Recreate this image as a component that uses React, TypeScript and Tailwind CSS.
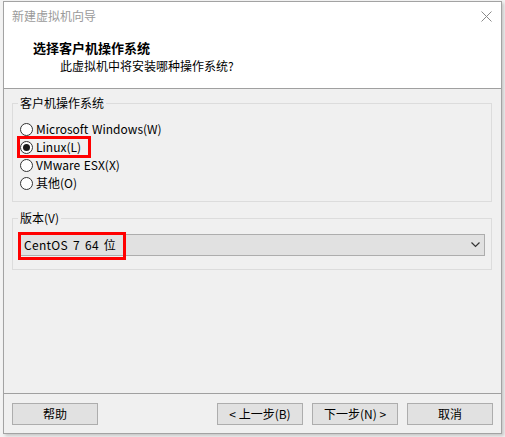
import React from 'react';

function Radio({ label, checked, marked }: { label: string; checked?: boolean; marked?: boolean }) {
  return (
    <div className="relative flex h-[18px] items-center gap-[3px]">
      <span className="flex h-[13px] w-[13px] items-center justify-center rounded-full border border-[#333333] bg-white">
        {checked && <span className="h-[7px] w-[7px] rounded-full bg-[#1a1a1a]" />}
      </span>
      <span className="leading-[18px] [word-spacing:1px]">{label}</span>
      {marked && (
        <span className="absolute left-[-3px] top-[-2px] h-[22px] w-[74px] border-[3px] border-[#ff0000]" />
      )}
    </div>
  );
}

function Button({ children }: { children: React.ReactNode }) {
  return (
    <button className="flex h-[22px] w-[86px] items-center justify-center border border-[#adadad] bg-[#e1e1e1] leading-[16px] text-black">
      {children}
    </button>
  );
}

export default function App() {
  return (
    <div className="h-[437px] w-[505px] bg-[#f3f3f3] pl-[3px] pt-[1px] font-['Noto_Sans_CJK_SC',sans-serif] text-[12px] text-black">
      <div className="flex h-[433px] w-[499px] flex-col border border-[#a3a3a3] bg-[#f0f0f0] shadow-[2px_2px_3px_rgba(0,0,0,0.18)]">
        {/* Header */}
        <div className="flex h-[87px] flex-col border-b border-[#a0a0a0] bg-white">
          <div className="flex h-[28px] items-center justify-between pl-[8px] pr-[9px]">
            <span className="leading-[16px] text-[#9a9a9a]">新建虚拟机向导</span>
            <svg width="11" height="11" viewBox="0 0 11 11">
              <path d="M0.5 0.5 L10.5 10.5 M10.5 0.5 L0.5 10.5" stroke="#8a8a8a" strokeWidth="1" fill="none" />
            </svg>
          </div>
          <p className="mt-[10px] pl-[29px] text-[13px] font-bold leading-[16px]">选择客户机操作系统</p>
          <p className="mt-[2px] pl-[56px] leading-[16px]">此虚拟机中将安装哪种操作系统?</p>
        </div>

        {/* Body */}
        <div className="flex-1 px-[8px]">
          <fieldset className="mt-[7px] w-[480px] border border-[#dcdcdc] pb-[9px] pl-[7px] pr-[6px] pt-[10px]">
            <legend className="ml-[-2px] px-[2px] leading-[14px]">客户机操作系统</legend>
            <Radio label="Microsoft Windows(W)" />
            <Radio label="Linux(L)" checked marked />
            <Radio label="VMware ESX(X)" />
            <Radio label="其他(O)" />
          </fieldset>

          <fieldset className="mt-[9px] w-[480px] border border-[#dcdcdc] pb-[13px] pl-[7px] pr-[6px] pt-[9px]">
            <legend className="ml-[-2px] px-[2px] leading-[14px]">版本(V)</legend>
            <div className="relative flex h-[22px] w-[465px] items-center justify-between border border-[#adadad] bg-[#e1e1e1] pl-[3px] pr-[4px]">
              <span className="leading-[16px] tracking-[0.3px] [word-spacing:2px]">CentOS 7 64 位</span>
              <svg width="9" height="6" viewBox="0 0 9 6">
                <path d="M0.5 0.5 L4.5 4.5 L8.5 0.5" stroke="#333333" strokeWidth="1.2" fill="none" />
              </svg>
              <span className="absolute left-[-3px] top-[-3px] h-[28px] w-[108px] border-[3px] border-[#ff0000]" />
            </div>
          </fieldset>
        </div>

        {/* Footer */}
        <div className="flex h-[40px] items-start border-t border-[#a0a0a0] pl-[8px] pr-[8px] pt-[9px]">
          <Button>帮助</Button>
          <div className="ml-auto flex gap-[9px]">
            <Button>&lt; 上一步(B)</Button>
            <Button>下一步(N) &gt;</Button>
            <Button>取消</Button>
          </div>
        </div>
      </div>
    </div>
  );
}
